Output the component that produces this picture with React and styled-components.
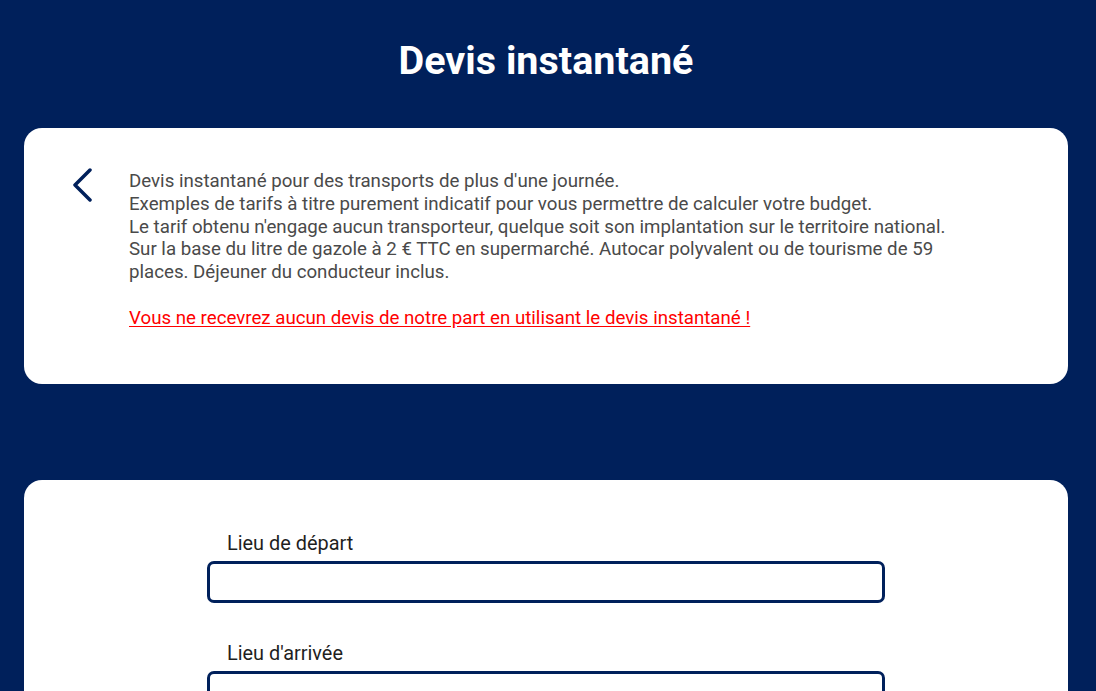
import styled, { createGlobalStyle } from "styled-components";

const GlobalStyle = createGlobalStyle`
    html, body {
        margin: 0;
        padding: 0;
        background: #00205b;
        font-family: Roboto, "Liberation Sans", sans-serif;
    }
`;

const Page = styled.div`
    min-height: 691px;
    background: #00205b;
    padding: 0 28px 0 24px;
    box-sizing: border-box;
`;

const Title = styled.h1`
    margin: 0;
    padding: 37px 0 43px;
    text-align: center;
    color: #ffffff;
    font-size: 39.5px;
    font-weight: 700;
    line-height: 48px;
`;

const Card = styled.section`
    background: #ffffff;
    border-radius: 18px;
    box-sizing: border-box;
    margin-bottom: ${({ $gap }) => $gap || 0}px;
`;

const InfoCard = styled(Card)`
    display: flex;
    align-items: flex-start;
    padding: 42px 40px 54px 46px;
    gap: 35px;
`;

const BackButton = styled.button`
    border: none;
    background: none;
    padding: 0;
    margin-top: -2px;
    width: 24px;
    height: 34px;
    cursor: pointer;
    color: #00205b;
`;

const Info = styled.div`
    max-width: 830px;
    font-size: 18.7px;
    line-height: 22.8px;
    color: #4a4a4a;
`;

const Warning = styled.a`
    color: #ff0000;
    text-decoration: underline;
    text-underline-offset: 2px;
`;

const FormCard = styled(Card)`
    display: flex;
    flex-direction: column;
    align-items: center;
    padding: 52px 0 40px;
`;

const Field = styled.div`
    width: 678px;
    margin-bottom: 39px;
`;

const Label = styled.label`
    display: block;
    padding-left: 20px;
    margin-bottom: 5px;
    font-size: 19.9px;
    line-height: 24px;
    color: #1f1f1f;
`;

const Input = styled.input`
    display: block;
    width: 100%;
    height: 42px;
    box-sizing: border-box;
    border: 3px solid #00205b;
    border-radius: 7px;
    font-family: inherit;
    font-size: 16px;
    padding: 0 12px;
    outline: none;
`;

const Chevron = () => (
    <svg width="24" height="34" viewBox="0 0 24 34" fill="none">
        <path d="M20 2 L5 17 L20 32" stroke="currentColor" strokeWidth="3.5" strokeLinecap="round" strokeLinejoin="round" />
    </svg>
);

const App = () => {
    return (
        <Page>
            <GlobalStyle />
            <Title>Devis instantané</Title>
            <InfoCard $gap={96}>
                <BackButton aria-label="Retour">
                    <Chevron />
                </BackButton>
                <Info>
                    Devis instantané pour des transports de plus d'une journée.<br />
                    Exemples de tarifs à titre purement indicatif pour vous permettre de calculer votre budget.<br />
                    Le tarif obtenu n'engage aucun transporteur, quelque soit son implantation sur le territoire national.<br />
                    Sur la base du litre de gazole à 2 € TTC en supermarché. Autocar polyvalent ou de tourisme de 59 places. Déjeuner du conducteur inclus.<br />
                    <br />
                    <Warning href="#">Vous ne recevrez aucun devis de notre part en utilisant le devis instantané !</Warning>
                </Info>
            </InfoCard>
            <FormCard>
                <Field>
                    <Label htmlFor="depart">Lieu de départ</Label>
                    <Input id="depart" type="text" />
                </Field>
                <Field>
                    <Label htmlFor="arrivee">Lieu d'arrivée</Label>
                    <Input id="arrivee" type="text" />
                </Field>
            </FormCard>
        </Page>
    );
};

export default App;
